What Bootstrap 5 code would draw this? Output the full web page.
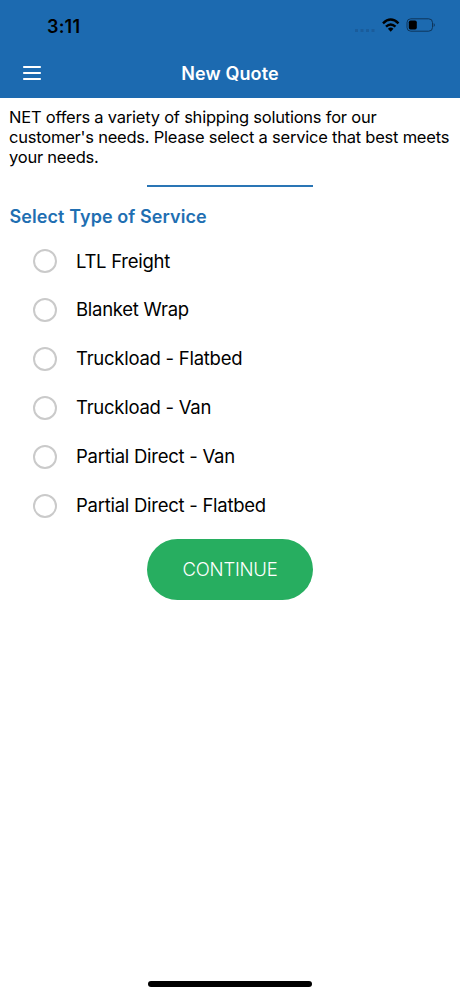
<!DOCTYPE html>
<html lang="en">
<head>
<meta charset="utf-8">
<meta name="viewport" content="width=device-width, initial-scale=1">
<title>New Quote</title>
<link href="https://cdn.jsdelivr.net/npm/bootstrap@5.3.0/dist/css/bootstrap.min.css" rel="stylesheet">
<style>
body{font-family:Inter,sans-serif;color:#000;height:996px;overflow:hidden}
.app-header{background:#1c6ab0;height:98px}
.status-bar{height:50px;padding:3px 24px 0 47px}
.clock{font-size:18px;font-weight:600;line-height:1;letter-spacing:.2px}
.title-bar{height:48px;display:grid;grid-template-columns:64px 1fr 64px}
.page-title{font-size:18px;font-weight:600;line-height:1;letter-spacing:.12px}
.menu-btn{padding:0 0 4px 23px}
.intro{font-size:16.5px;line-height:20px;margin:9px 0 0 9px;letter-spacing:-.225px}
.rule{width:166px;height:2px;background:#2a75b5;margin-top:18px}
.section-title{font-size:18px;line-height:24px;font-weight:600;color:#1f6fb2;margin:18px 0 0 9.5px;letter-spacing:.08px}
.service{height:48.85px;padding-left:33px;gap:19px;font-size:18.5px;letter-spacing:-.26px}
.service .form-check-input{width:24px;height:24px;margin:0;border:2px solid #cacaca}
.services{margin-top:8px}
.btn-continue{--bs-btn-color:#fff;--bs-btn-bg:#27ae60;--bs-btn-hover-bg:#229954;--bs-btn-hover-color:#fff;width:166px;height:61px;padding-top:8px;font-size:18.5px;font-weight:300;letter-spacing:-.25px;margin-top:8.5px}
.home-indicator{width:164px;height:6px;background:#000;margin-bottom:9px}
</style>
</head>
<body class="d-flex flex-column bg-white">
<header class="app-header">
<div class="status-bar d-flex align-items-center justify-content-between">
<span class="clock">3:11</span>
<svg width="82" height="20" viewBox="0 0 82 20"><g fill="#1a5c9b"><rect x="1" y="12" width="3" height="3" rx=".5"/><rect x="6.500" y="12" width="3" height="3" rx=".5"/><rect x="12" y="12" width="3" height="3" rx=".5"/><rect x="17.500" y="12" width="3" height="3" rx=".5"/></g><g fill="none" stroke="#000" stroke-width="2.400"><path d="M29 6.400Q36.700 -1.200 44.500 6.400M32 9.700Q36.700 5.200 41.500 9.700"/></g><path d="M33.900 11.700Q36.700 9.300 39.500 11.700L36.700 14.800Z"/><rect x="53" y="1.800" width="25.500" height="12.400" rx="3.800" fill="none" stroke="#0e355a"/><rect x="54.800" y="3.500" width="8" height="9" rx="1.800"/><path d="M79.700 6Q82 8 79.700 10Z" fill="#0e355a"/></svg>
</div>
<div class="title-bar align-items-center">
<button class="menu-btn btn border-0 text-start lh-1" aria-label="Menu"><svg width="18" height="16" viewBox="0 0 18 16" stroke="#fff" stroke-width="2.200"><path d="M.2 2H17.800M.2 8H17.800M.2 14H17.800"/></svg></button>
<h1 class="page-title text-white text-center m-0">New Quote</h1>
</div>
</header>
<main class="d-flex flex-column flex-grow-1">
<p class="intro mb-0">NET offers a variety of shipping solutions for our<br>customer's needs. Please select a service that best meets<br>your needs.</p>
<div class="rule mx-auto"></div>
<h2 class="section-title mb-0">Select Type of Service</h2>
<div class="services">
<label class="service d-flex align-items-center"><input class="form-check-input" type="radio" name="service"><span>LTL Freight</span></label>
<label class="service d-flex align-items-center"><input class="form-check-input" type="radio" name="service"><span>Blanket Wrap</span></label>
<label class="service d-flex align-items-center"><input class="form-check-input" type="radio" name="service"><span>Truckload - Flatbed</span></label>
<label class="service d-flex align-items-center"><input class="form-check-input" type="radio" name="service"><span>Truckload - Van</span></label>
<label class="service d-flex align-items-center"><input class="form-check-input" type="radio" name="service"><span>Partial Direct - Van</span></label>
<label class="service d-flex align-items-center"><input class="form-check-input" type="radio" name="service"><span>Partial Direct - Flatbed</span></label>
</div>
<button class="btn btn-continue rounded-pill mx-auto">CONTINUE</button>
</main>
<div class="home-indicator rounded-pill mx-auto"></div>
<script src="https://cdn.jsdelivr.net/npm/bootstrap@5.3.0/dist/js/bootstrap.bundle.min.js"></script>
</body>
</html>
